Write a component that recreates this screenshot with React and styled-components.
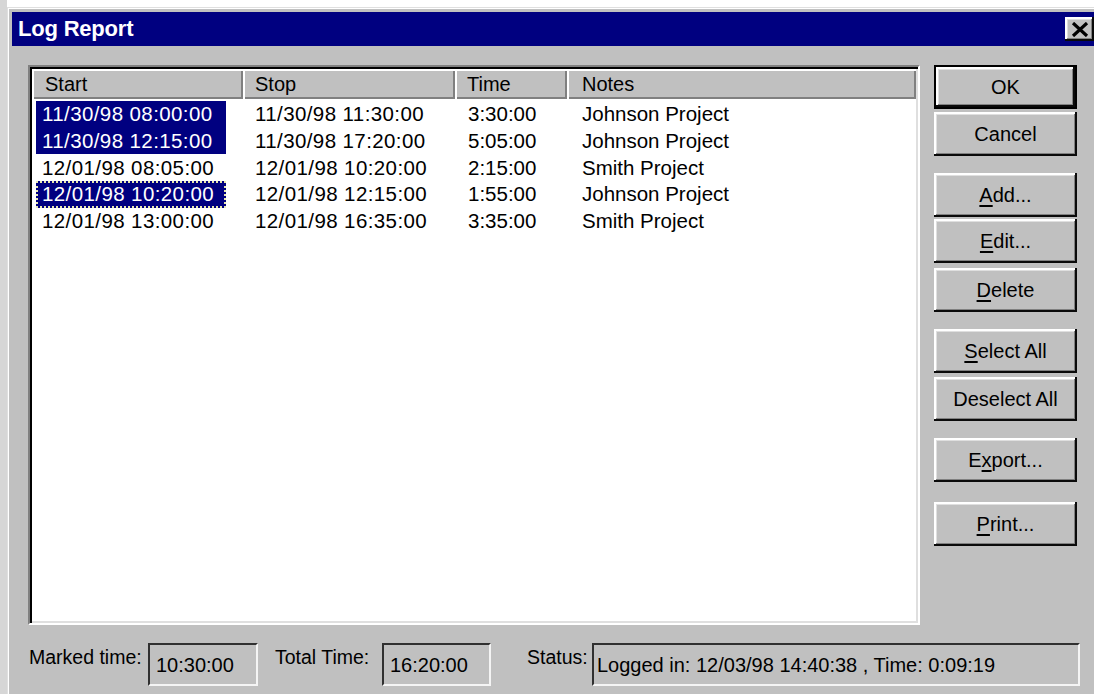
import React from 'react';
import styled, { createGlobalStyle, css } from 'styled-components';

const GlobalStyle = createGlobalStyle`
    html, body {
        margin: 0;
        padding: 0;
        background: #ffffff;
        overflow: hidden;
    }
    body {
        font-family: "Liberation Sans", Arial, sans-serif;
    }
`;

const Desktop = styled.div`
    width: 1094px;
    height: 694px;
    box-sizing: border-box;
    padding-top: 7px;
    border-left: 7px solid #d6d6d6;
    overflow: hidden;
`;

const Window = styled.div`
    width: 1093px;
    height: 700px;
    box-sizing: border-box;
    background: #c0c0c0;
    border-top: 1px solid #dfdfdf;
    border-left: 1px solid #dfdfdf;
    box-shadow: inset 1px 1px #ffffff;
    padding: 4px;
`;

const TitleBar = styled.div`
    height: 34px;
    background: #000080;
    display: flex;
    align-items: center;
    justify-content: space-between;
    padding: 0 2px 0 6px;
`;

const Title = styled.span`
    color: #ffffff;
    font-weight: bold;
    font-size: 22px;
    letter-spacing: -0.2px;
`;

const raised = css`
    background: #c0c0c0;
    box-shadow:
        inset -2px -2px #0a0a0a,
        inset 2px 2px #ffffff,
        inset -3px -3px #808080,
        inset 3px 3px #dfdfdf;
`;

const CloseButton = styled.div`
    ${raised};
    width: 29px;
    height: 24px;
    display: flex;
    align-items: center;
    justify-content: center;
`;

const Body = styled.div`
    padding: 19px 0 0 16px;
`;

const MainRow = styled.div`
    display: flex;
    gap: 14px;
`;

const ListBox = styled.div`
    width: 892px;
    height: 560px;
    box-sizing: border-box;
    border: 2px solid;
    border-color: #808080 #ffffff #ffffff #808080;
    box-shadow: inset 2px 2px #000000, inset -2px -2px #dfdfdf;
    padding: 2px;
    background: #ffffff;
    display: flex;
    flex-direction: column;
`;

const columns = css`
    display: grid;
    grid-template-columns: 211px 212px 112px 1fr;
`;

const Header = styled.div`
    ${columns};
    height: 30px;
    background: #c0c0c0;
`;

const HeaderCell = styled.div`
    display: flex;
    align-items: center;
    padding-left: ${p => p.$indent || 13}px;
    font-size: 20px;
    color: #000;
    box-shadow: inset 2px 2px #ffffff, inset -2px -2px #808080;
`;

const Rows = styled.div`
    padding-top: 2px;
`;

const Row = styled.div`
    ${columns};
    height: 26.67px;
    font-size: 20.5px;
    color: #000;
`;

const Cell = styled.div`
    display: flex;
    align-items: center;
    padding-left: ${p => p.$indent}px;
    white-space: nowrap;
    letter-spacing: ${p => (p.$date ? '0.4px' : '0')};
`;

const StartCell = styled.div`
    display: flex;
    align-items: center;
    margin-left: 4px;
    width: 190px;
    box-sizing: border-box;
    padding-left: 6px;
    letter-spacing: 0.4px;
    white-space: nowrap;
    background: ${p => (p.$selected ? '#000080' : 'transparent')};
    color: ${p => (p.$selected ? '#ffffff' : '#000000')};
    outline: ${p => (p.$focus ? '2px dotted #e8e8b0' : 'none')};
    outline-offset: -2px;
`;

const ButtonColumn = styled.div`
    width: 143px;
    display: flex;
    flex-direction: column;
`;

const Button = styled.div`
    ${raised};
    height: 44px;
    margin-top: ${p => p.$gap || 0}px;
    display: flex;
    align-items: center;
    justify-content: center;
    font-size: 20px;
    color: #000;
    ${p => p.$default && css`
        box-shadow:
            inset -2px -2px #000000,
            inset 2px 2px #000000,
            inset -4px -4px #0a0a0a,
            inset 4px 4px #ffffff,
            inset -5px -5px #808080,
            inset 5px 5px #dfdfdf;
    `}

    u {
        text-decoration-thickness: 2px;
        text-underline-offset: 3px;
    }
`;

const Footer = styled.div`
    display: grid;
    grid-template-columns: 120px 110px 124px 109px 101px 488px;
    align-items: center;
    margin-top: 18px;
`;

const Label = styled.div`
    font-size: 19.5px;
    color: #000;
    padding-left: ${p => p.$indent || 0}px;
    padding-bottom: 14px;
    white-space: nowrap;
`;

const Field = styled.div`
    height: 43px;
    box-sizing: border-box;
    border: 2px solid;
    border-color: #303030 #f4f4f4 #f4f4f4 #303030;
    display: flex;
    align-items: center;
    padding-left: ${p => p.$indent || 5}px;
    padding-top: 2px;
    font-size: 20px;
    color: #000;
    white-space: nowrap;
`;

const entries = [
    { start: '11/30/98 08:00:00', stop: '11/30/98 11:30:00', time: '3:30:00', notes: 'Johnson Project', selected: true },
    { start: '11/30/98 12:15:00', stop: '11/30/98 17:20:00', time: '5:05:00', notes: 'Johnson Project', selected: true },
    { start: '12/01/98 08:05:00', stop: '12/01/98 10:20:00', time: '2:15:00', notes: 'Smith Project' },
    { start: '12/01/98 10:20:00', stop: '12/01/98 12:15:00', time: '1:55:00', notes: 'Johnson Project', selected: true, focus: true },
    { start: '12/01/98 13:00:00', stop: '12/01/98 16:35:00', time: '3:35:00', notes: 'Smith Project' },
];

function CloseGlyph() {
    return (
        <svg width="18" height="15" viewBox="0 0 18 15">
            <path d="M2 1 L16 14 M16 1 L2 14" stroke="#000" strokeWidth="3.2" fill="none" />
        </svg>
    );
}

export default function App() {
    return (
        <>
            <GlobalStyle />
            <Desktop>
                <Window>
                    <TitleBar>
                        <Title>Log Report</Title>
                        <CloseButton><CloseGlyph /></CloseButton>
                    </TitleBar>

                    <Body>
                        <MainRow>
                            <ListBox>
                                <Header>
                                    <HeaderCell>Start</HeaderCell>
                                    <HeaderCell $indent={12}>Stop</HeaderCell>
                                    <HeaderCell $indent={12}>Time</HeaderCell>
                                    <HeaderCell $indent={15}>Notes</HeaderCell>
                                </Header>
                                <Rows>
                                    {entries.map(e => (
                                        <Row key={e.start}>
                                            <StartCell $selected={e.selected} $focus={e.focus}>{e.start}</StartCell>
                                            <Cell $indent={12} $date>{e.stop}</Cell>
                                            <Cell $indent={13}>{e.time}</Cell>
                                            <Cell $indent={15}>{e.notes}</Cell>
                                        </Row>
                                    ))}
                                </Rows>
                            </ListBox>

                            <ButtonColumn>
                                <Button $default>OK</Button>
                                <Button $gap={3}>Cancel</Button>
                                <Button $gap={17}><u>A</u>dd...</Button>
                                <Button $gap={2}><u>E</u>dit...</Button>
                                <Button $gap={5}><u>D</u>elete</Button>
                                <Button $gap={17}><u>S</u>elect All</Button>
                                <Button $gap={4}>Deselect All</Button>
                                <Button $gap={17}>E<u>x</u>port...</Button>
                                <Button $gap={20}><u>P</u>rint...</Button>
                            </ButtonColumn>
                        </MainRow>

                        <Footer>
                            <Label $indent={1}>Marked time:</Label>
                            <Field $indent={6}>10:30:00</Field>
                            <Label $indent={17}>Total Time:</Label>
                            <Field $indent={6}>16:20:00</Field>
                            <Label $indent={36}>Status:</Label>
                            <Field $indent={3}>Logged in: 12/03/98 14:40:38 , Time: 0:09:19</Field>
                        </Footer>
                    </Body>
                </Window>
            </Desktop>
        </>
    );
}
